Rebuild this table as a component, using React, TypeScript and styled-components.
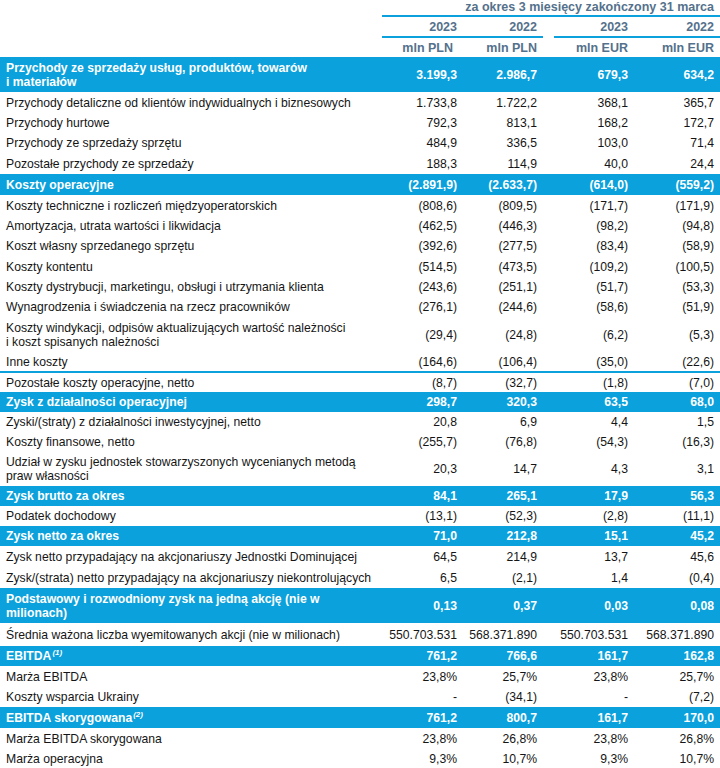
import React from 'react';
import styled, { createGlobalStyle } from 'styled-components';

const BLUE = '#0aa1dc';
const HEAD = '#54718c';

const Global = createGlobalStyle`
  html, body { margin: 0; padding: 0; background: #ffffff; }
  body { font-family: "Liberation Sans", Arial, sans-serif; }
`;

const Table = styled.table`
  width: 720px;
  table-layout: fixed;
  border-collapse: separate;
  border-spacing: 0;
  font-family: "Liberation Sans", Arial, sans-serif;
  font-size: 12.2px;
  line-height: 14px;
  color: #151515;
`;

const HeadRow = styled.tr<{ $h: number }>`
  height: ${(p) => p.$h}px;
`;

const HeadCell = styled.th<{ $line?: boolean; $pr?: number; $align?: string }>`
  padding: 0 ${(p) => p.$pr ?? 6}px 0 0;
  text-align: right;
  vertical-align: ${(p) => p.$align ?? 'middle'};
  font-size: 12.5px;
  font-weight: bold;
  color: ${HEAD};
  white-space: nowrap;
  border-bottom: ${(p) => (p.$line ? `2px solid ${BLUE}` : '0')};
`;

const BodyRow = styled.tr<{ $blue?: boolean; $h: number }>`
  height: ${(p) => p.$h}px;
  background: ${(p) => (p.$blue ? BLUE : 'transparent')};
  color: ${(p) => (p.$blue ? '#ffffff' : '#151515')};
  font-weight: ${(p) => (p.$blue ? 'bold' : 'normal')};
`;

const Label = styled.td`
  padding: 0 0 0 6px;
  text-align: left;
  vertical-align: middle;
  white-space: nowrap;
`;

const Num = styled.td<{ $pr: number }>`
  padding: 0 ${(p) => p.$pr}px 0 0;
  text-align: right;
  vertical-align: middle;
  white-space: nowrap;
`;

const Spacer = styled.td``;

const RuleRow = styled.tr`
  height: 2px;
  background: ${BLUE};
`;

const RuleCell = styled.td`
  padding: 0;
  height: 2px;
  line-height: 0;
  font-size: 0;
`;

const Sup = styled.sup`
  font-size: 8px;
  font-style: italic;
  line-height: 0;
  vertical-align: 5px;
  margin-left: 1px;
`;

type Row = {
  label: React.ReactNode;
  v: [string, string, string, string];
  h: number;
  blue?: boolean;
  ruleBefore?: boolean;
};

const rows: Row[] = [
  {
    label: (
      <>
        Przychody ze sprzedaży usług, produktów, towarów
        <br />i materiałów
      </>
    ),
    v: ['3.199,3', '2.986,7', '679,3', '634,2'],
    h: 35,
    blue: true,
  },
  { label: 'Przychody detaliczne od klientów indywidualnych i biznesowych', v: ['1.733,8', '1.722,2', '368,1', '365,7'], h: 21 },
  { label: 'Przychody hurtowe', v: ['792,3', '813,1', '168,2', '172,7'], h: 20 },
  { label: 'Przychody ze sprzedaży sprzętu', v: ['484,9', '336,5', '103,0', '71,4'], h: 20 },
  { label: 'Pozostałe przychody ze sprzedaży', v: ['188,3', '114,9', '40,0', '24,4'], h: 21 },
  { label: 'Koszty operacyjne', v: ['(2.891,9)', '(2.633,7)', '(614,0)', '(559,2)'], h: 21, blue: true },
  { label: 'Koszty techniczne i rozliczeń międzyoperatorskich', v: ['(808,6)', '(809,5)', '(171,7)', '(171,9)'], h: 21 },
  { label: 'Amortyzacja, utrata wartości i likwidacja', v: ['(462,5)', '(446,3)', '(98,2)', '(94,8)'], h: 20 },
  { label: 'Koszt własny sprzedanego sprzętu', v: ['(392,6)', '(277,5)', '(83,4)', '(58,9)'], h: 20 },
  { label: 'Koszty kontentu', v: ['(514,5)', '(473,5)', '(109,2)', '(100,5)'], h: 21 },
  { label: 'Koszty dystrybucji, marketingu, obsługi i utrzymania klienta', v: ['(243,6)', '(251,1)', '(51,7)', '(53,3)'], h: 20 },
  { label: 'Wynagrodzenia i świadczenia na rzecz pracowników', v: ['(276,1)', '(244,6)', '(58,6)', '(51,9)'], h: 20 },
  {
    label: (
      <>
        Koszty windykacji, odpisów aktualizujących wartość należności
        <br />i koszt spisanych należności
      </>
    ),
    v: ['(29,4)', '(24,8)', '(6,2)', '(5,3)'],
    h: 35,
  },
  { label: 'Inne koszty', v: ['(164,6)', '(106,4)', '(35,0)', '(22,6)'], h: 19 },
  { label: 'Pozostałe koszty operacyjne, netto', v: ['(8,7)', '(32,7)', '(1,8)', '(7,0)'], h: 19, ruleBefore: true },
  { label: 'Zysk z działalności operacyjnej', v: ['298,7', '320,3', '63,5', '68,0'], h: 20, blue: true },
  { label: 'Zyski/(straty) z działalności inwestycyjnej, netto', v: ['20,8', '6,9', '4,4', '1,5'], h: 20 },
  { label: 'Koszty finansowe, netto', v: ['(255,7)', '(76,8)', '(54,3)', '(16,3)'], h: 20 },
  {
    label: (
      <>
        Udział w zysku jednostek stowarzyszonych wycenianych metodą
        <br />
        praw własności
      </>
    ),
    v: ['20,3', '14,7', '4,3', '3,1'],
    h: 34,
  },
  { label: 'Zysk brutto za okres', v: ['84,1', '265,1', '17,9', '56,3'], h: 20, blue: true },
  { label: 'Podatek dochodowy', v: ['(13,1)', '(52,3)', '(2,8)', '(11,1)'], h: 20 },
  { label: 'Zysk netto za okres', v: ['71,0', '212,8', '15,1', '45,2'], h: 20, blue: true },
  { label: 'Zysk netto przypadający na akcjonariuszy Jednostki Dominującej', v: ['64,5', '214,9', '13,7', '45,6'], h: 21 },
  { label: 'Zysk/(strata) netto przypadający na akcjonariuszy niekontrolujących', v: ['6,5', '(2,1)', '1,4', '(0,4)'], h: 21 },
  {
    label: (
      <>
        Podstawowy i rozwodniony zysk na jedną akcję (nie w
        <br />
        milionach)
      </>
    ),
    v: ['0,13', '0,37', '0,03', '0,08'],
    h: 35,
    blue: true,
  },
  { label: 'Średnia ważona liczba wyemitowanych akcji (nie w milionach)', v: ['550.703.531', '568.371.890', '550.703.531', '568.371.890'], h: 23 },
  {
    label: (
      <>
        EBITDA<Sup>(1)</Sup>
      </>
    ),
    v: ['761,2', '766,6', '161,7', '162,8'],
    h: 20,
    blue: true,
  },
  { label: 'Marża EBITDA', v: ['23,8%', '25,7%', '23,8%', '25,7%'], h: 21 },
  { label: 'Koszty wsparcia Ukrainy', v: ['-', '(34,1)', '-', '(7,2)'], h: 20 },
  {
    label: (
      <>
        EBITDA skorygowana<Sup>(2)</Sup>
      </>
    ),
    v: ['761,2', '800,7', '161,7', '170,0'],
    h: 21,
    blue: true,
  },
  { label: 'Marża EBITDA skorygowana', v: ['23,8%', '26,8%', '23,8%', '26,8%'], h: 21 },
  { label: 'Marża operacyjna', v: ['9,3%', '10,7%', '9,3%', '10,7%'], h: 20 },
];

const PAD: [number, number, number, number] = [5, 6, 6, 6];

export default function App() {
  return (
    <>
      <Global />
      <Table>
        <colgroup>
          <col style={{ width: 382 }} />
          <col style={{ width: 80 }} />
          <col style={{ width: 81 }} />
          <col style={{ width: 11 }} />
          <col style={{ width: 80 }} />
          <col style={{ width: 86 }} />
        </colgroup>
        <thead>
          <HeadRow $h={17}>
            <HeadCell $line={false} />
            <HeadCell colSpan={5} $line $align="top">
              za okres 3 miesięcy zakończony 31 marca
            </HeadCell>
          </HeadRow>
          <HeadRow $h={21}>
            <HeadCell />
            <HeadCell $line $pr={PAD[0]}>2023</HeadCell>
            <HeadCell $line $pr={PAD[1]}>2022</HeadCell>
            <HeadCell />
            <HeadCell $line $pr={PAD[2]}>2023</HeadCell>
            <HeadCell $line $pr={PAD[3]}>2022</HeadCell>
          </HeadRow>
          <HeadRow $h={19}>
            <HeadCell />
            <HeadCell $pr={9}>mln PLN</HeadCell>
            <HeadCell $pr={PAD[1]}>mln PLN</HeadCell>
            <HeadCell />
            <HeadCell $pr={PAD[2]}>mln EUR</HeadCell>
            <HeadCell $pr={PAD[3]}>mln EUR</HeadCell>
          </HeadRow>
        </thead>
        <tbody>
          {rows.map((r, i) => (
            <React.Fragment key={i}>
              {r.ruleBefore && (
                <RuleRow>
                  <RuleCell colSpan={6} />
                </RuleRow>
              )}
              <BodyRow $blue={r.blue} $h={r.h}>
                <Label>{r.label}</Label>
                <Num $pr={PAD[0]}>{r.v[0]}</Num>
                <Num $pr={PAD[1]}>{r.v[1]}</Num>
                <Spacer />
                <Num $pr={PAD[2]}>{r.v[2]}</Num>
                <Num $pr={PAD[3]}>{r.v[3]}</Num>
              </BodyRow>
            </React.Fragment>
          ))}
        </tbody>
      </Table>
    </>
  );
}
